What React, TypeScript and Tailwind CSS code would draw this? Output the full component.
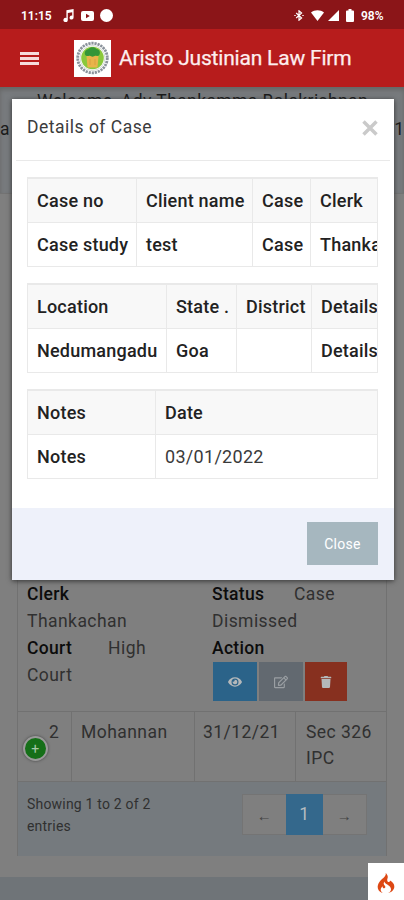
import React from "react";
import { FaEye, FaRegEdit, FaTrash } from "react-icons/fa";
import { SiCodeigniter } from "react-icons/si";

function StatusBar() {
  return (
    <div className="flex h-[29px] items-center bg-[#8b1518] pl-[21px] pr-[19px] pt-[2px] text-[12px] font-semibold text-white">
      <span className="w-[42px]">11:15</span>
      <svg className="h-[13px] w-[11px]" viewBox="0 0 11 13" fill="#fff">
        <path d="M3.4 1.2 10.6 0v8.6a2 2 0 1 1-1.4-1.9V3.2L4.8 4v6.9a2.2 2.2 0 1 1-1.4-2z" />
      </svg>
      <svg className="ml-[7px] h-[10px] w-[13px]" viewBox="0 0 13 10">
        <rect width="13" height="10" rx="2" fill="#fff" />
        <path d="M5 2.8v4.4L8.8 5z" fill="#8b1518" />
      </svg>
      <span className="ml-[6px] h-[13px] w-[13px] rounded-full bg-white" />
      <span className="flex-1" />
      <svg className="h-[11px] w-[10px]" viewBox="0 0 10 11" fill="none" stroke="#fff" strokeWidth="1.2">
        <path d="m2.2 3 5.4 5L5 10.2V.8L7.6 3 2.2 8" />
        <path d="M.3 5.5h1.4M8.3 5.5h1.4" />
      </svg>
      <svg className="ml-[7px] h-[11px] w-[13px]" viewBox="0 0 13 11" fill="#fff">
        <path d="M0 2.6C3.5-.4 9.5-.4 13 2.6L6.5 11z" />
      </svg>
      <svg className="ml-[4px] h-[11px] w-[11px]" viewBox="0 0 11 11" fill="#fff">
        <path d="M11 0v11H0z" />
      </svg>
      <svg className="ml-[7px] h-[13px] w-[8px]" viewBox="0 0 8 13" fill="#fff">
        <path d="M2.500 0h3v1.500H7a1 1 0 0 1 1 1V12a1 1 0 0 1-1 1H1a1 1 0 0 1-1-1V2.500a1 1 0 0 1 1-1h1.500z" />
      </svg>
      <span className="ml-[7px] w-[24px] whitespace-nowrap text-[12px]">98%</span>
    </div>
  );
}

function Emblem() {
  return (
    <svg className="h-[37px] w-[37px] bg-white" viewBox="0 0 37 37">
      <circle cx="18.5" cy="18" r="14.8" fill="none" stroke="#8a929b" strokeWidth="2.8" strokeDasharray="2.2 0.9" />
      <circle cx="18.5" cy="18" r="12.5" fill="none" stroke="#c9cfc9" strokeWidth="0.8" />
      <circle cx="18.5" cy="18" r="11.3" fill="#8ac83c" />
      <path d="M12.5 16h12l-1 11.500h-10z" fill="#e9b44a" />
      <path d="M11 14.500c-1-4 2-5 3.500-5.500 2-2.500 6-2.500 8 0 3 .5 4 3 3 5.500-1 2-3 1.500-4 1-2 1.500-4 1.500-6 0-2 1-4 .5-4.500-1z" fill="#349537" />
      <path d="M16 19v6M21 19v6" stroke="#d9a040" strokeWidth="1" />
    </svg>
  );
}

function AppBar() {
  return (
    <header className="flex h-[58px] items-center bg-[#b71c1c] pl-[20px]">
      <div className="flex w-[54px] flex-col gap-[2px]">
        <span className="h-[3px] w-[19px] bg-[#f6dcdc]" />
        <span className="h-[3px] w-[19px] bg-[#f6dcdc]" />
        <span className="h-[3px] w-[19px] bg-[#f6dcdc]" />
      </div>
      <Emblem />
      <h1 className="ml-[8px] whitespace-nowrap pt-[2px] text-[21px] tracking-[-0.2px] text-[#fdeeee] [-webkit-text-stroke:0.25px_#fdeeee]">Aristo Justinian Law Firm</h1>
    </header>
  );
}

function CaseList() {
  return (
    <div className="mx-[17px] flex h-[276px] flex-col border-x border-[#717171] text-[17.5px] tracking-[0.45px] text-[#303030]">
      <div className="flex h-[131px] pl-[9px] pt-px leading-[27px]">
        <div className="w-[185px]">
          <div><b className="font-medium tracking-[0.3px] text-[#0c0c0c]">Clerk</b></div>
          <div>Thankachan</div>
          <div><b className="inline-block w-[81px] font-medium tracking-[0.3px] text-[#0c0c0c]">Court</b>High</div>
          <div>Court</div>
        </div>
        <div>
          <div><b className="inline-block w-[82px] font-medium tracking-[0.3px] text-[#0c0c0c]">Status</b>Case</div>
          <div>Dismissed</div>
          <div><b className="font-medium tracking-[0.3px] text-[#0c0c0c]">Action</b></div>
          <div className="flex gap-[2px] pl-px text-[14px] text-[#b4b8ba]">
            <span className="flex h-[39px] w-[44px] items-center justify-center bg-[#2b6389]"><FaEye /></span>
            <span className="flex h-[39px] w-[44px] items-center justify-center bg-[#626970] text-[#9a9fa3]"><FaRegEdit /></span>
            <span className="flex h-[39px] w-[42px] items-center justify-center bg-[#87301f]"><FaTrash size={12} /></span>
          </div>
        </div>
      </div>
      <div className="flex h-[71px] border-y border-[#717171] leading-[26px]">
        <div className="flex w-[54px] items-end border-r border-[#717171] pb-[20px] pl-[5px]">
          <span className="flex h-[25px] w-[25px] items-center justify-center rounded-full border-2 border-[#9a9a9a] bg-[#156f18] text-[14px] text-[#a8c8a8] shadow-[0_0_3px_#444]">+</span>
          <span className="mb-[16px] ml-[1px] h-[26px]">2</span>
        </div>
        <div className="w-[123px] border-r border-[#717171] pl-[9px] pt-[7px]">Mohannan</div>
        <div className="w-[101px] border-r border-[#717171] pl-[8px] pt-[7px]">31/12/21</div>
        <div className="pl-[10px] pt-[7px]">Sec 326<br />IPC</div>
      </div>
      <div className="flex h-[74px] justify-between bg-[#757a7e] pl-[9px] pr-[19px] pt-[12px]">
        <div className="w-[140px] text-[14px] leading-[22px] tracking-[0.2px]"><div className="-mt-px">Showing 1 to 2 of 2 entries</div></div>
        <div className="flex h-[41px] border border-[#747474] bg-[#7f7f7f]">
          <span className="flex w-[43px] items-center justify-center pt-[4px] text-[15px] text-[#444]">←</span>
          <span className="-my-px flex w-[37px] items-center justify-center bg-[#34688c] text-[#b5bcc0]">1</span>
          <span className="flex w-[43px] items-center justify-center pt-[4px] text-[15px] text-[#444]">→</span>
        </div>
      </div>
    </div>
  );
}

type Cell = { w: string; head: string; body: string; light?: boolean };

function CaseTable({ cells }: { cells: Cell[] }) {
  return (
    <div className="flex h-[90px] w-[351px] overflow-hidden border border-t-2 border-[#e9e9e9] text-[18px] font-medium tracking-[0.22px] text-[#222]">
      {cells.map((c, i) => (
        <div key={i} className={"shrink-0 whitespace-nowrap " + c.w + (i < cells.length - 1 ? " border-r border-[#e9e9e9]" : "")}>
          <div className="flex h-[44px] items-center border-b border-[#e9e9e9] bg-[#f8f8f8] pb-px pl-[9px]">{c.head}</div>
          <div className={"flex h-[43px] items-center pb-px pl-[9px]" + (c.light ? " font-normal tracking-[0.3px] text-[#3a3a3a]" : "")}>{c.body}</div>
        </div>
      ))}
    </div>
  );
}

function CaseDialog() {
  return (
    <section className="absolute left-[12px] top-[99px] flex h-[481px] w-[382px] flex-col bg-white shadow-[0_1px_5px_#333]">
      <div className="mx-[4px] flex h-[62px] shrink-0 justify-between border-b border-[#e9e9e9] pl-[11px] pr-[12px] pt-[15px]">
        <h2 className="text-[17.5px] leading-[26px] tracking-[0.5px] text-[#3c3c3c]">Details of Case</h2>
        <svg className="mt-[6px] h-[16px] w-[16px]" viewBox="0 0 16 16" stroke="#cacaca" strokeWidth="3.5">
          <path d="m1.500 1.500 13 13M14.500 1.500l-13 13" />
        </svg>
      </div>
      <div className="flex flex-col gap-[16px] pl-[15px] pt-[16px]">
        <CaseTable
          cells={[
            { w: "w-[109px]", head: "Case no", body: "Case study" },
            { w: "w-[116px]", head: "Client name", body: "test" },
            { w: "w-[58px]", head: "Case", body: "Case" },
            { w: "w-[110px]", head: "Clerk", body: "Thankachan" },
          ]}
        />
        <CaseTable
          cells={[
            { w: "w-[139px]", head: "Location", body: "Nedumangadu" },
            { w: "w-[70px]", head: "State .", body: "Goa" },
            { w: "w-[75px]", head: "District", body: "" },
            { w: "w-[90px]", head: "Details", body: "Details" },
          ]}
        />
        <CaseTable
          cells={[
            { w: "w-[128px]", head: "Notes", body: "Notes" },
            { w: "w-[222px]", head: "Date", body: "03/01/2022", light: true },
          ]}
        />
      </div>
      <div className="mt-auto flex h-[72px] justify-end bg-[#eef1fa] pr-[16px] pt-[14px]">
        <button className="h-[43px] w-[71px] bg-[#a6b7bf] pt-px text-[14px] tracking-[0.3px] text-white">Close</button>
      </div>
    </section>
  );
}

export default function App() {
  return (
    <div className="relative flex h-[900px] w-[404px] flex-col overflow-hidden bg-[#7f7f7f] font-[Roboto,sans-serif]">
      <StatusBar />
      <AppBar />
      <div className="h-[107px] shrink-0 border-b border-[#737373] bg-[#787b7e] text-[17.5px] text-[#1b1b1b] shadow-[inset_0_3px_4px_#666]">
        <p className="h-[29px] whitespace-nowrap pl-[37px] pt-[1px] tracking-[0.4px]">Welcome, Adv Thankamma Balakrishnan</p>
        <div className="flex justify-between"><span>a</span><span>1</span></div>
      </div>
      <div className="h-[386px] shrink-0" />
      <CaseList />
      <div className="mt-auto h-[23px] bg-[#6f7478]" />
      <CaseDialog />
      <div className="absolute bottom-0 right-0 flex h-[37px] w-[36px] items-center justify-center bg-white pt-[3px] text-[20px] text-[#dd4814]">
        <SiCodeigniter />
      </div>
    </div>
  );
}
